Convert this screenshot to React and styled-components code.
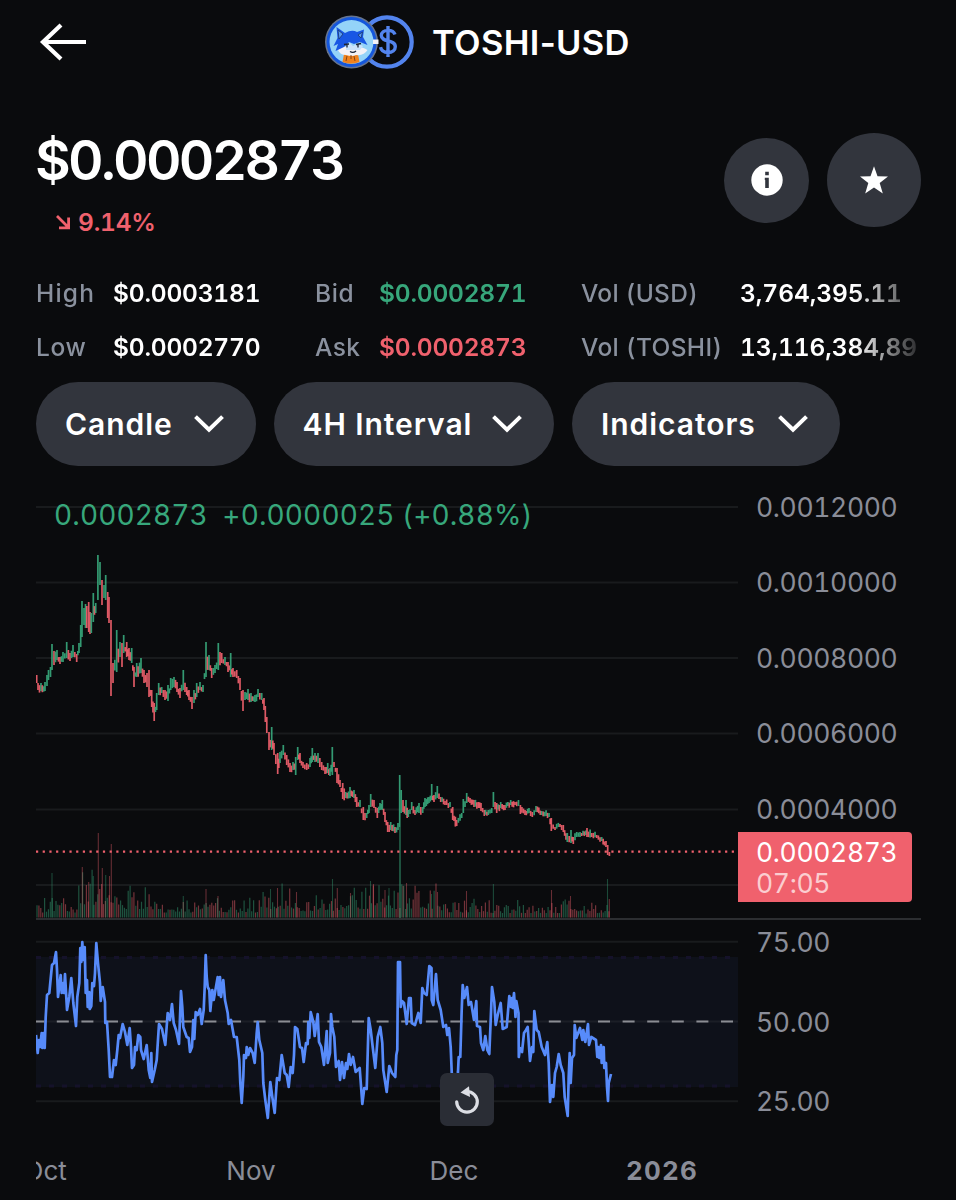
import React from 'react';
import styled, { createGlobalStyle } from 'styled-components';

const GlobalStyle = createGlobalStyle`
  * {
    box-sizing: border-box;
  }

  body {
    margin: 0;
    background: #0a0b0d;
    color: #fff;
    font-family: Inter, 'Liberation Sans', sans-serif;
    font-variant-numeric: tabular-nums;
  }
`;

const Page = styled.main`
  width: 956px;
  height: 1200px;
  padding: 0 35px 0 36px;
  display: flex;
  flex-direction: column;
  overflow: hidden;
`;

const Header = styled.header`
  height: 84px;
  flex: none;
  display: flex;
  align-items: center;
`;

const BackButton = styled.button`
  width: 54px;
  height: 44px;
  margin-right: 235px;
  padding: 0;
  border: 0;
  background: none;
  display: flex;
  align-items: center;
`;

const Title = styled.h1`
  margin: 2px 0 0 17px;
  font-size: 34.5px;
  font-weight: 600;
  font-variant-numeric: normal;
  line-height: 40px;
  letter-spacing: 0.35px;
  white-space: nowrap;
`;

const Summary = styled.section`
  height: 182px;
  flex: none;
  display: flex;
  justify-content: space-between;
`;

const Price = styled.div`
  margin: 44px 0 0 -1px;
  font-size: 55px;
  font-weight: 600;
  line-height: 64px;
  letter-spacing: -2.7px;
`;

const Change = styled.div`
  margin: 15px 0 0 20px;
  display: flex;
  align-items: center;
  gap: 7px;
  color: #f0616d;
  font-size: 24.5px;
  font-weight: 600;
  line-height: 30px;
  letter-spacing: -0.2px;
`;

const Actions = styled.div`
  height: 94px;
  margin-top: 49px;
  display: flex;
  align-items: center;
  gap: 18px;
`;

const RoundButton = styled.button`
  width: ${({ size }) => size}px;
  height: ${({ size }) => size}px;
  padding: 0;
  border: 0;
  border-radius: 50%;
  background: #32353d;
  display: flex;
  align-items: center;
  justify-content: center;
`;

const Stats = styled.dl`
  height: 116px;
  flex: none;
  margin: 0;
  display: grid;
  grid-template-columns: 77px 202px 64px 202px 159px 181px;
  grid-template-rows: 54px 54px;
  align-items: center;
  overflow: hidden;
  white-space: nowrap;
  mask-image: linear-gradient(to right, #000 818px, transparent 892px);
`;

const StatLabel = styled.dt`
  color: #8a919e;
  font-size: 24.5px;
  font-weight: 500;
  letter-spacing: ${({ spacing }) => spacing || 0.6}px;
`;

const StatValue = styled.dd`
  margin: 0;
  color: ${({ color }) => color || '#fff'};
  font-size: 24.5px;
  font-weight: 600;
  letter-spacing: ${({ spacing }) => spacing || -0.2}px;
`;

const Filters = styled.div`
  flex: none;
  display: flex;
  gap: 18px;
`;

const Pill = styled.button`
  width: ${({ width }) => width}px;
  height: 84px;
  padding: 0 32px 0 29px;
  border: 0;
  border-radius: 42px;
  background: #32353d;
  color: #fff;
  display: flex;
  align-items: center;
  justify-content: space-between;
  font-family: inherit;
  font-size: 30px;
  font-weight: 600;
  letter-spacing: 0.95px;
  white-space: nowrap;
`;

const Chart = styled.section`
  position: relative;
  flex: 1;
  display: flex;
  flex-direction: column;
`;

const Pane = styled.div`
  height: ${({ height }) => height}px;
  display: flex;
  flex: none;
`;

const PricePane = styled(Pane)`
  border-bottom: 2px solid #2c2e31;
`;

const Plot = styled.svg`
  width: 702px;
  height: 100%;
  flex: none;
  display: block;
`;

const Axis = styled.div`
  padding: ${({ top }) => top}px 0 0 18px;
  color: #8a8d98;
  font-size: 26.5px;
  letter-spacing: -0.35px;
`;

const Tick = styled.div`
  height: ${({ step }) => step}px;
  line-height: 30px;
`;

const Legend = styled.div`
  position: absolute;
  left: 18px;
  top: 32px;
  display: flex;
  gap: 14.5px;
  color: #37a77b;
  font-size: 28px;
  line-height: 34px;
  letter-spacing: 0.12px;
  white-space: nowrap;
`;

const PriceTag = styled.div`
  position: absolute;
  left: 702px;
  top: 366px;
  width: 174px;
  height: 70px;
  padding: 5px 0 0 18px;
  border-radius: 0 4px 4px 0;
  background: #f0616d;
  font-size: 26.5px;
  line-height: 31px;
  letter-spacing: -0.35px;
`;

const Countdown = styled.div`
  color: #fbcdd0;
`;

const ResetButton = styled.button`
  position: absolute;
  left: 404px;
  top: 607px;
  width: 54px;
  height: 53px;
  padding: 0;
  border: 0;
  border-radius: 7px;
  background: #2a2d35;
  display: flex;
  align-items: center;
  justify-content: center;
`;

const TimeAxis = styled.div`
  display: grid;
  grid-template-columns: 113.5px 203px 203px 213px;
  overflow: hidden;
  color: #8a8d98;
  font-size: 26px;
  line-height: 34px;
  text-align: center;
`;

const Month = styled.span`
  margin-left: ${({ shift }) => shift || 0}px;
  text-align: ${({ shift }) => (shift ? 'left' : 'center')};
`;

const Year = styled.span`
  font-weight: 700;
  letter-spacing: 1.2px;
`;

const GREEN = '#37a77b';
const RED = '#f0616d';

// [x, high, low]
const candles = [
  [36.7, 675, 683], [38, 683, 690], [41, 683, 691], [45, 682, 691], [47, 675, 686], [48.5, 670, 680],
  [50.5, 667, 677], [52, 644, 670], [54, 651, 665], [57, 650, 660], [60, 657, 664], [63, 652, 662],
  [66.7, 642, 658], [70, 653, 661], [73, 645, 657], [76.7, 654, 662], [79, 643, 653], [80.7, 625, 647],
  [82, 601, 637], [84, 608, 625], [85.5, 604, 628], [86.8, 606, 628], [88.7, 602, 632], [90, 612, 634],
  [91.3, 613, 633], [93.3, 593, 622], [95.7, 603, 613], [97.9, 555, 600], [100, 562, 585], [102, 580, 605],
  [104, 585, 598], [105.7, 575, 600], [107.7, 592, 618], [109, 597, 623], [111, 620, 696], [113, 663, 683],
  [116.7, 630, 672], [120, 642, 657], [122, 643, 667], [123.7, 635, 653], [126.7, 642, 657], [129, 648, 660],
  [131.7, 648, 663], [134, 667, 687], [136.7, 663, 677], [141, 658, 673], [144, 670, 683], [147, 673, 687],
  [149, 670, 697], [151.7, 690, 707], [154.2, 703, 721], [156.7, 693, 710], [158.7, 683, 695], [161.7, 687, 693],
  [165, 690, 700], [168, 685, 701], [170.7, 678, 690], [174, 677, 687], [177, 682, 692], [180, 688, 698],
  [183.3, 670, 690], [186.7, 687, 695], [189, 690, 700], [192, 697, 709], [194, 690, 703], [196.7, 683, 697],
  [200, 682, 690], [203, 685, 692], [206, 642, 677], [209, 655, 670], [211.7, 668, 678], [215, 665, 673],
  [218.3, 643, 670], [221.7, 653, 663], [225, 657, 665], [228, 662, 672], [230.7, 653, 677], [233, 668, 677],
  [236.7, 670, 678], [240, 678, 690], [243, 690, 711], [245, 692, 700], [248, 689, 700], [251, 693, 702],
  [255, 695, 702], [258, 689, 697], [261.7, 693, 700], [264, 698, 710], [265.3, 706, 722], [266.8, 717, 733],
  [269, 732, 750], [271.7, 727, 750], [274, 743, 755], [277.7, 753, 774], [280, 752, 763], [283.3, 745, 755],
  [286.7, 755, 765], [290, 763, 772], [293, 762, 770], [295.7, 757, 775], [297.7, 747, 760], [300, 753, 763],
  [303, 762, 768], [306.7, 763, 770], [310, 758, 767], [312.3, 748, 762], [315, 753, 762], [318, 753, 763],
  [321.7, 762, 770], [325, 767, 774], [327.7, 763, 773], [330, 768, 776], [332.3, 747, 775], [334, 762, 767],
  [337, 768, 783], [340, 780, 787], [342.7, 783, 799], [345.7, 792, 798], [350, 787, 798], [354, 790, 798],
  [356.7, 797, 807], [360, 800, 807], [363.3, 807, 820], [366.7, 813, 818], [369, 805, 813], [370.7, 794, 807],
  [374, 800, 808], [377.3, 808, 818], [380, 803, 810], [382.3, 800, 810], [385, 812, 822], [387.7, 822, 832],
  [390.7, 822, 830], [395, 827, 833], [398, 823, 830], [399.7, 775, 827], [401.2, 790, 813], [403, 800, 812],
  [406, 800, 815], [408.3, 810, 817], [411.7, 802, 810], [415, 810, 815], [419, 803, 813], [422.7, 807, 813],
  [425, 798, 807], [429, 797, 803], [431.7, 784, 800], [434, 795, 802], [437.3, 786, 798], [440.7, 797, 802],
  [445, 801, 805], [450, 802, 807], [452.7, 807, 820], [456.7, 820, 826], [461.7, 813, 818], [463.3, 799, 813],
  [466.7, 793, 803], [470, 798, 803], [474, 800, 807], [478.3, 802, 808], [481, 803, 811], [484.3, 810, 816],
  [488.3, 810, 815], [491.7, 808, 813], [493.4, 792, 807], [496.7, 803, 813], [500.7, 802, 808], [505, 805, 810],
  [510.7, 800, 805], [515, 802, 805], [518.5, 800, 806], [520.4, 805, 814], [525, 810, 815], [529, 808, 813],
  [532.3, 812, 817], [536, 806, 812], [541.7, 811, 815], [549, 813, 817], [551.3, 818, 831], [555, 827, 830],
  [560, 824, 827], [563.3, 825, 832], [567.3, 833, 842], [571, 830, 843], [573.3, 837, 844], [576.7, 832, 837],
  [581.7, 833, 836], [587, 828, 837], [591.7, 833, 837], [596.7, 835, 838], [601.7, 837, 841], [606, 841, 847],
  [607.7, 845, 855], [609.4, 852, 856],
];

// bars that stand above the usual traded volume: [x, top]
const volumePeaks = [
  [52, 873], [82.3, 867], [88.7, 882], [93.3, 876], [98.3, 833], [102.3, 868], [105.7, 875], [109.5, 876],
  [111.3, 844], [183.3, 896], [206, 889], [218, 896], [270.5, 889], [277.5, 888], [296.5, 892], [332.5, 879],
  [337.3, 888], [350.5, 893], [370.5, 881], [373.5, 884], [385, 890], [389, 888], [403, 886], [406.5, 883],
  [431.5, 894], [437.5, 892], [466.5, 891], [493.4, 884], [551.5, 890], [570.5, 896], [607.5, 879], [609.3, 899],
];

// [until x, average bar height]
const volumeLevels = [[78, 11], [124, 27], [162, 18], [262, 11], [300, 19], [345, 14], [440, 19], [480, 11], [560, 10], [580, 13], [612, 9]];

const rsi = [
  36, 1035, 37.7, 1053, 39, 1040, 40, 1047, 41.7, 1033, 42.3, 1048, 43.3, 1033, 44.7, 1048, 45.7, 1017, 47, 995,
  49.3, 993, 52, 965, 54, 963, 56, 952, 57, 970, 58, 997, 60.7, 975, 61.7, 993, 63.3, 983, 64, 993, 65, 974,
  67, 1010, 69.3, 997, 71.3, 978, 73.3, 1003, 76, 1026, 77.3, 997, 79.3, 983, 80.3, 948, 81.3, 962, 82.3, 942,
  83.3, 960, 84.7, 947, 85.7, 993, 87, 980, 87.7, 1007, 89.3, 992, 89.7, 1009, 91.3, 1006, 92.3, 983, 94, 986,
  95, 973, 96.3, 943, 98, 963, 100, 983, 100.7, 1001, 102.7, 987, 105, 1002, 105.3, 1023, 107, 1022, 108.7, 1050,
  110, 1077, 112, 1077, 114, 1060, 115.7, 1065, 117.3, 1050, 118.7, 1035, 120, 1038, 122.7, 1024, 125, 1032,
  127.3, 1045, 129.7, 1028, 131, 1047, 132, 1068, 134, 1065, 135, 1047, 136.7, 1050, 138.3, 1035, 140.3, 1037,
  141, 1050, 143.7, 1059, 146.7, 1045, 148.7, 1070, 150.3, 1078, 151.3, 1053, 152, 1082, 154.7, 1070, 156.7, 1060,
  159, 1024, 162, 1029, 165.3, 1045, 167.7, 1013, 170, 1020, 172, 1004, 173.7, 1023, 176, 1030, 179, 1044,
  181, 991, 182.3, 1007, 183.3, 1027, 186.7, 1037, 188.7, 1038, 190, 1052, 192, 1047, 193.3, 1020, 194.3, 1039,
  195.7, 1012, 197.7, 1015, 200, 1009, 201.7, 1024, 203.7, 1010, 204.7, 987, 205.7, 955, 206.7, 977, 207.7, 987,
  209.3, 990, 210.3, 1011, 212.3, 990, 213.7, 1000, 217.7, 977, 218.7, 995, 220, 977, 221, 997, 223.3, 980,
  225, 1000, 227.7, 1013, 228.7, 1024, 231, 1020, 234, 1037, 236.7, 1037, 239.3, 1060, 240.3, 1083, 241.7, 1103,
  243.3, 1077, 244, 1055, 246, 1058, 246.7, 1047, 248.3, 1055, 250, 1048, 252.7, 1053, 254.7, 1063, 256.7, 1033,
  257.7, 1022, 259.3, 1040, 262.3, 1053, 263.3, 1083, 265.3, 1100, 267.8, 1118, 270.3, 1082, 272.3, 1097,
  274.7, 1113, 277, 1078, 279.3, 1080, 281.7, 1055, 284.7, 1073, 286.7, 1075, 288.7, 1087, 290.7, 1067,
  292.7, 1073, 294, 1055, 295, 1027, 297.3, 1029, 300, 1047, 302, 1048, 303.7, 1062, 306, 1043, 307.7, 1044,
  308.3, 1022, 309.3, 1038, 310.7, 1012, 313.3, 1022, 314.7, 1036, 317.7, 1014, 319, 1042, 321.3, 1047,
  324, 1065, 326.7, 1031, 327.7, 1063, 330, 1053, 331, 1014, 332.3, 1027, 334.3, 1037, 336, 1067, 338.7, 1061,
  340, 1080, 342, 1062, 344, 1078, 346, 1063, 347.3, 1069, 349, 1054, 350.7, 1065, 353, 1057, 355.7, 1072,
  359.7, 1068, 362.3, 1104, 364.3, 1088, 366.7, 1089, 368.7, 1018, 370.7, 1030, 372.7, 1047, 375.3, 1068,
  377.7, 1037, 380.3, 1027, 382.3, 1043, 383.3, 1070, 386.7, 1092, 389.3, 1066, 392, 1073, 395.3, 1077,
  396.3, 1055, 397.3, 1050, 398, 962, 400, 962, 400.7, 1007, 402, 1001, 404, 1003, 406.7, 1024, 409, 998,
  410.7, 998, 411.7, 1023, 415, 1025, 418.3, 1013, 420.7, 1023, 422.3, 988, 424, 993, 426.7, 995, 429.3, 966,
  431.5, 968, 431.7, 1000, 433.3, 1005, 436, 974, 437.7, 1000, 440.7, 1010, 443.3, 1027, 446, 1025, 447.3, 1035,
  449, 1028, 450.7, 1047, 451.7, 1072, 453, 1085, 456, 1090, 458, 1072, 458.7, 1057, 460.3, 1057, 461.7, 1010,
  462.7, 985, 464.3, 998, 467, 987, 468.7, 1005, 471, 1002, 474, 1020, 476.3, 1001, 477, 1026, 480, 1027,
  481, 1043, 483.3, 1050, 485.3, 1036, 487.3, 1050, 489.3, 1054, 490.7, 1020, 492, 987, 494.3, 1002, 495.7, 1025,
  497.7, 1015, 500.7, 1003, 502.7, 1029, 506.7, 1027, 509.3, 996, 511, 1007, 512, 998, 512.7, 1008, 514, 993,
  515.5, 1017, 516.3, 1001, 518.5, 1013, 518.8, 1057, 520, 1048, 522, 1052, 524, 1033, 526, 1030, 527.7, 1027,
  530, 1061, 532, 1047, 533.3, 1052, 534.3, 1011, 536.7, 1030, 538.7, 1032, 541.7, 1047, 545, 1055, 547.3, 1042,
  548.7, 1063, 550, 1102, 552, 1085, 553.3, 1097, 555, 1073, 556.7, 1067, 558.7, 1054, 560.7, 1065, 563.3, 1073,
  564.7, 1097, 567.7, 1116, 568.7, 1077, 569.7, 1053, 570.7, 1083, 572, 1058, 574, 1055, 574.7, 1025, 576.3, 1038,
  580, 1028, 582.3, 1040, 583.3, 1030, 585.3, 1042, 588, 1024, 589, 1045, 591.3, 1037, 596, 1040, 597.3, 1057,
  598.3, 1047, 599.3, 1058, 601, 1045, 601.7, 1063, 603.7, 1047, 604.3, 1068, 606, 1063, 607, 1087, 608, 1101,
  608.7, 1083, 611, 1074,
];

// repeatable pseudo random numbers, so every render draws the same bars
const noise = (n) => {
  const value = Math.sin(n * 127.1 + 11.7) * 43758.5453;
  return value - Math.floor(value);
};

// puts a short candle between neighbours that stand far apart
const fillCandles = (list) => {
  const result = [];
  list.forEach((candle, i) => {
    result.push(candle);
    const next = list[i + 1];
    if (!next) return;
    const gap = next[0] - candle[0];
    const extra = Math.round(gap / 1.5) - 1;
    for (let k = 1; k <= extra; k++) {
      const t = k / (extra + 1);
      const from = (candle[1] + candle[2] * 2) / 3;
      const to = (next[1] + next[2] * 2) / 3;
      const middle = from + (to - from) * t + (noise(i * 3 + k) - 0.7) * 3;
      const half = 2 + noise(i * 7 + k) * Math.min(5, (candle[2] - candle[1]) / 4);
      result.push([candle[0] + gap * t, middle - half, middle + half]);
    }
  });
  return result;
};

const volumeBars = () => {
  const bars = [];
  for (let x = 37, i = 0; x < 610; x += 1.9, i++) {
    const level = volumeLevels.find(([until]) => x < until)[1];
    const height = level * (0.45 + noise(i) ** 2 * 1.35);
    bars.push([x, 917.5 - height, noise(i + 500) > 0.5 ? GREEN : RED]);
  }
  return bars;
};

const Candles = () => {
  const list = fillCandles(candles);
  return list.map(([x, high, low], i) => {
    const prev = list[i - 1] || [0, 670, 680];
    const falling = high + low + (noise(i) - 0.5) * 5 > prev[1] + prev[2];
    return (
      <line key={i} x1={x} x2={x} y1={high} y2={low} stroke={falling ? RED : GREEN} strokeWidth="1.7" strokeOpacity="0.92" />
    );
  });
};

const PricePlot = () => (
  <Plot viewBox="36 466 702 452">
    {[507, 582.5, 658, 733.5, 809.5, 885].map((y) => (
      <line key={y} x1="36" x2="738" y1={y} y2={y} stroke="#191b1d" strokeWidth="2" />
    ))}
    {volumeBars().map(([x, top, color]) => (
      <line key={x} x1={x} x2={x} y1={top} y2="917.5" stroke={color} strokeWidth="1.2" strokeOpacity="0.46" />
    ))}
    {volumePeaks.map(([x, top], i) => (
      <line key={x} x1={x} x2={x} y1={top} y2="917.5" stroke={i % 3 ? RED : GREEN} strokeWidth="1.1" strokeOpacity="0.4" />
    ))}
    <line x1="400" x2="400" y1="827" y2="918" stroke={GREEN} strokeWidth="1.8" strokeOpacity="0.5" />
    <Candles />
    <line x1="36" x2="738" y1="851.7" y2="851.7" stroke={RED} strokeWidth="2.2" strokeDasharray="2.2 4.49" />
  </Plot>
);

const RsiPlot = () => (
  <Plot viewBox="36 920 702 234">
    <rect x="36" y="957" width="702" height="130" fill="#0e111a" />
    <line x1="36" x2="738" y1="957.5" y2="957.5" stroke="#15122a" strokeWidth="3" strokeDasharray="5 8" />
    <line x1="36" x2="738" y1="1086" y2="1086" stroke="#15122a" strokeWidth="3" strokeDasharray="5 8" />
    <line x1="36" x2="738" y1="941.7" y2="941.7" stroke="#191b1d" strokeWidth="2" />
    <line x1="36" x2="738" y1="1101.3" y2="1101.3" stroke="#191b1d" strokeWidth="2" />
    <line x1="36" x2="738" y1="1021.5" y2="1021.5" stroke="#1b1e26" strokeWidth="2" />
    <line x1="36" x2="738" y1="1021.5" y2="1021.5" stroke="#8b8d93" strokeWidth="2" strokeDasharray="12 12.6" strokeDashoffset="3.8" />
    <polyline points={rsi.join(' ')} fill="none" stroke="#578bfa" strokeWidth="2.7" strokeLinejoin="round" />
  </Plot>
);

const BackIcon = () => (
  <svg width="54" height="44" viewBox="36 20 54 44" fill="none" stroke="#fff" strokeWidth="4.2">
    <path d="M86 42H43M61 25L43 42L61 59" />
  </svg>
);

const PairLogo = () => (
  <svg width="90" height="56" viewBox="325 14 90 56">
    <circle cx="387" cy="42" r="24.7" fill="#0a0b0d" stroke="#5384ee" strokeWidth="4.2" />
    <path
      d="M395 34.5C394 31.7 391.5 30.4 388 30.4C384 30.4 381.3 32.5 381.3 35.6C381.3 43 395.3 38.8 395.3 46.8C395.3 50.2 392.3 52.5 388 52.5C384 52.5 381.2 50.5 380.5 47.2M388 26V57"
      fill="none"
      stroke="#5384ee"
      strokeWidth="3.4"
    />
    <circle cx="351.5" cy="42" r="26.5" fill="#66748f" />
    <circle cx="351.5" cy="42" r="25" fill="#1557dc" />
    <circle cx="351.5" cy="42" r="22" fill="#94d3f8" />
    <path d="M342.5 62L344 54Q351 51 358 54L359.5 62Q351 65.5 342.5 62Z" fill="#f0821e" />
    <path d="M338 50Q343 45 351 47Q360 45 367.5 50Q364 56 356 55Q352 57 346 55Q340 55 338 50Z" fill="#f4f2f6" />
    <path d="M336.5 27L345 33Q352 29 357 32L364 29.5L363 37L367.5 45L360 42L354 44L349 42L344 47L335.5 51L338 44L333.5 46L337.5 38Z" fill="#1857e4" />
    <path d="M338 30L343 34L339 39ZM362.5 32L358 35L361 38Z" fill="#5a9cf0" stroke="#18356e" strokeWidth="0.8" />
    <path d="M346 46L350 43L353 46L358 43.5L363 46L360 50L346 50Z" fill="#c9e2fb" />
    <path d="M347 44.5V47.5M358 44.5V47.5M344 44.5L349 44M356 44.5L361 43.5M350 51.5Q353 53.5 356 51" fill="none" stroke="#1c2436" strokeWidth="1.3" />
    <path d="M346 61L347 56M351 55V59M355 61L354 56" stroke="#7c3d12" strokeWidth="0.9" />
    <rect x="373" y="39.5" width="5.5" height="4.5" fill="#f1f2f8" />
  </svg>
);

const InfoIcon = () => (
  <svg width="32" height="32" viewBox="0 0 32 32">
    <circle cx="16" cy="16" r="15.7" fill="#fff" />
    <path d="M14.2 7.8H17.8V11.3H14.2ZM13.8 13.8H17.8V24H14.2V16H13.8Z" fill="#32353d" />
  </svg>
);

const StarIcon = () => (
  <svg width="30" height="30" viewBox="0 0 30 30">
    <path d="M15 1.2L18.5 11.3L29 11.5L20.7 18L23.8 28.5L15 22.5L6.2 28.5L9.3 18L1 11.5L11.5 11.3Z" fill="#fff" />
  </svg>
);

const FallIcon = () => (
  <svg width="15" height="15" viewBox="0 0 15 15" fill="none" stroke="#f0616d" strokeWidth="2.8">
    <path d="M1 1L12 12M12.6 2.5V12.8H3" />
  </svg>
);

const Chevron = () => (
  <svg width="30" height="20" viewBox="0 0 30 20" fill="none" stroke="#fff" strokeWidth="4">
    <path d="M1.5 2.6L15 15.8L28.5 2.6" />
  </svg>
);

const ResetIcon = () => (
  <svg width="30" height="32" viewBox="0 0 30 32">
    <path d="M4.7 17.8A10.3 10.3 0 1 0 15 7.5" fill="none" stroke="#dcdee4" strokeWidth="3.2" strokeLinecap="round" />
    <path d="M8.5 8.6L17 2.2L18 13Z" fill="#dcdee4" />
  </svg>
);

const App = () => {
  return (
    <Page>
      <GlobalStyle />
      <Header>
        <BackButton aria-label="Back"><BackIcon /></BackButton>
        <PairLogo />
        <Title>TOSHI-USD</Title>
      </Header>
      <Summary>
        <div>
          <Price>$0.0002873</Price>
          <Change><FallIcon />9.14%</Change>
        </div>
        <Actions>
          <RoundButton size={85} aria-label="Info"><InfoIcon /></RoundButton>
          <RoundButton size={94} aria-label="Favorite"><StarIcon /></RoundButton>
        </Actions>
      </Summary>
      <Stats>
        <StatLabel spacing={1.2}>High</StatLabel>
        <StatValue>$0.0003181</StatValue>
        <StatLabel>Bid</StatLabel>
        <StatValue color={GREEN}>$0.0002871</StatValue>
        <StatLabel spacing={0.3}>Vol (USD)</StatLabel>
        <StatValue spacing={-0.05}>3,764,395.11</StatValue>
        <StatLabel>Low</StatLabel>
        <StatValue>$0.0002770</StatValue>
        <StatLabel spacing={0.4}>Ask</StatLabel>
        <StatValue color={RED}>$0.0002873</StatValue>
        <StatLabel spacing={0.35}>Vol (TOSHI)</StatLabel>
        <StatValue spacing={-0.1}>13,116,384,89</StatValue>
      </Stats>
      <Filters>
        <Pill width={219.5}>Candle<Chevron /></Pill>
        <Pill width={280.5}>4H Interval<Chevron /></Pill>
        <Pill width={267.5}>Indicators<Chevron /></Pill>
      </Filters>
      <Chart>
        <PricePane height={454}>
          <PricePlot />
          <Axis top={25.7}>
            <Tick step={75.6}>0.0012000</Tick>
            <Tick step={75.6}>0.0010000</Tick>
            <Tick step={75.6}>0.0008000</Tick>
            <Tick step={75.6}>0.0006000</Tick>
            <Tick step={75.6}>0.0004000</Tick>
          </Axis>
        </PricePane>
        <Pane height={234}>
          <RsiPlot />
          <Axis top={7}>
            <Tick step={79.7}>75.00</Tick>
            <Tick step={79.7}>50.00</Tick>
            <Tick step={60}>25.00</Tick>
          </Axis>
        </Pane>
        <TimeAxis>
          <Month shift={-12.5}>Oct</Month>
          <Month>Nov</Month>
          <Month>Dec</Month>
          <Year>2026</Year>
        </TimeAxis>
        <Legend>
          <span>0.0002873</span>
          <span>+0.0000025 (+0.88%)</span>
        </Legend>
        <PriceTag>
          0.0002873
          <Countdown>07:05</Countdown>
        </PriceTag>
        <ResetButton aria-label="Reset chart"><ResetIcon /></ResetButton>
      </Chart>
    </Page>
  );
};

export default App;
